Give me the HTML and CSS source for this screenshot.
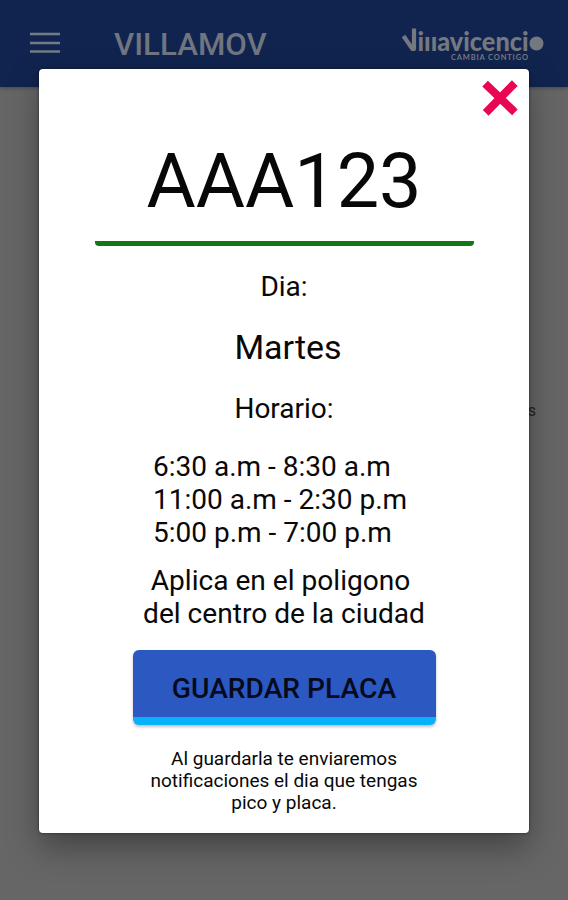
FILE: index.html
```html
<!DOCTYPE html>
<html lang="es">
<head>
<meta charset="utf-8">
<title>VILLAMOV</title>
<link rel="stylesheet" href="styles.css">
</head>
<body>
<div class="screen">
  <header class="topbar">
    <svg class="menu" width="30" height="22" viewBox="0 0 30 22"><path d="M0 2h30M0 11h30M0 19.500h30"/></svg>
    <h1 class="title">VILLAMOV</h1>
    <svg class="logo" width="146" height="40" viewBox="0 0 146 40">
      <path class="logo-v" d="M3.500 12 L12.500 25 H14 V4.500"/>
      <text class="logo-name" x="17.500" y="27" textLength="111" lengthAdjust="spacingAndGlyphs">iııavicenci</text>
      <circle cx="136.500" cy="19.500" r="7"/>
      <text class="logo-tag" x="51" y="36" textLength="77" lengthAdjust="spacing">CAMBIA CONTIGO</text>
    </svg>
  </header>
  <main class="page"><span class="page-text">s</span></main>
</div>
<section class="dialog">
  <div class="close-row">
    <svg class="close" width="36" height="36" viewBox="0 0 36 36"><path d="M6 6.500 L30 29.500 M30 6 L6.500 30"/></svg>
  </div>
  <div class="plate">AAA123</div>
  <div class="label day-label">Dia:</div>
  <div class="day">Martes</div>
  <div class="label hours-label">Horario:</div>
  <div class="hours">6:30 a.m - 8:30 a.m<br>11:00 a.m - 2:30 p.m<br>5:00 p.m - 7:00 p.m</div>
  <div class="zone"><span class="zone-first">Aplica en el poligono</span><br>del centro de la ciudad</div>
  <button class="save">GUARDAR PLACA</button>
  <p class="note">Al guardarla te enviaremos<br>notificaciones el dia que tengas<br>pico y placa.</p>
</section>
</body>
</html>
```
FILE: styles.css
```css
* { box-sizing: border-box; }
body { margin: 0; font-family: Roboto, sans-serif; color: #080808; }
.screen { height: 900px; display: flex; flex-direction: column; background: #666; overflow: hidden; }
.topbar { height: 87px; flex: none; display: flex; background: #11244f; box-shadow: 0 1px 4px rgba(0,0,0,.3); }
.menu { margin: 32px 0 0 30px; fill: none; stroke: #747b88; stroke-width: 2.6; }
.title { margin: 27px 0 0 54px; width: 160px; font-size: 31.3px; line-height: 36px; font-weight: 500; color: #70757f; white-space: nowrap; }
.logo { margin: 24px 0 0 126px; fill: #747980; }
.logo-v { fill: none; stroke: #747980; stroke-width: 4.2; stroke-linejoin: round; stroke-linecap: butt; }
.logo-name { font: 900 27px Lato, sans-serif; }
.logo-tag { font: 700 7.5px Lato, sans-serif; }
.page { flex: 1; display: flex; justify-content: flex-end; padding: 313px 32px 0 0; }
.page-text { font-size: 16px; line-height: 22px; color: #222; }
.dialog {
  position: absolute; left: 39px; top: 69px; width: 490px; height: 764px;
  display: flex; flex-direction: column; align-items: center;
  background: #fff; border-radius: 4px;
  box-shadow: 0 0 3px rgba(0,0,0,.5), 0 15px 32px rgba(0,0,0,.34);
}
.close-row { align-self: stretch; height: 48px; display: flex; justify-content: flex-end; padding: 11px 11px 0 0; }
.close { fill: none; stroke: #e90653; stroke-width: 8; stroke-linecap: square; stroke-linejoin: round; }
.plate { width: 379px; height: 129px; padding-top: 19px; font-size: 75.5px; line-height: 90px; text-align: center; border-bottom: 5px solid #137514; border-radius: 0 0 4px 4px; }
.label { font-size: 28px; line-height: 33px; }
.day-label { margin-top: 24px; }
.day { margin-top: 24px; padding-left: 8px; font-size: 34px; line-height: 40px; }
.hours-label { margin-top: 25px; }
.hours { margin-top: 25px; width: 262px; font-size: 28px; line-height: 33px; white-space: nowrap; }
.zone { margin-top: 15px; text-align: center; font-size: 28.1px; line-height: 33px; }
.zone-first { margin-right: 7px; }
.save { width: 303px; height: 75px; margin-top: 20px; padding: 10px 0 0; border: 0; border-bottom: 8px solid #08b2fb; border-radius: 6px; background: #2c58c1; color: #050a1c; font: 500 28.2px/33px Roboto, sans-serif; box-shadow: 0 2px 3px rgba(0,0,0,.25); white-space: nowrap; }
.note { margin: 23px 0 0; text-align: center; font-size: 19px; line-height: 22px; white-space: nowrap; }
```
